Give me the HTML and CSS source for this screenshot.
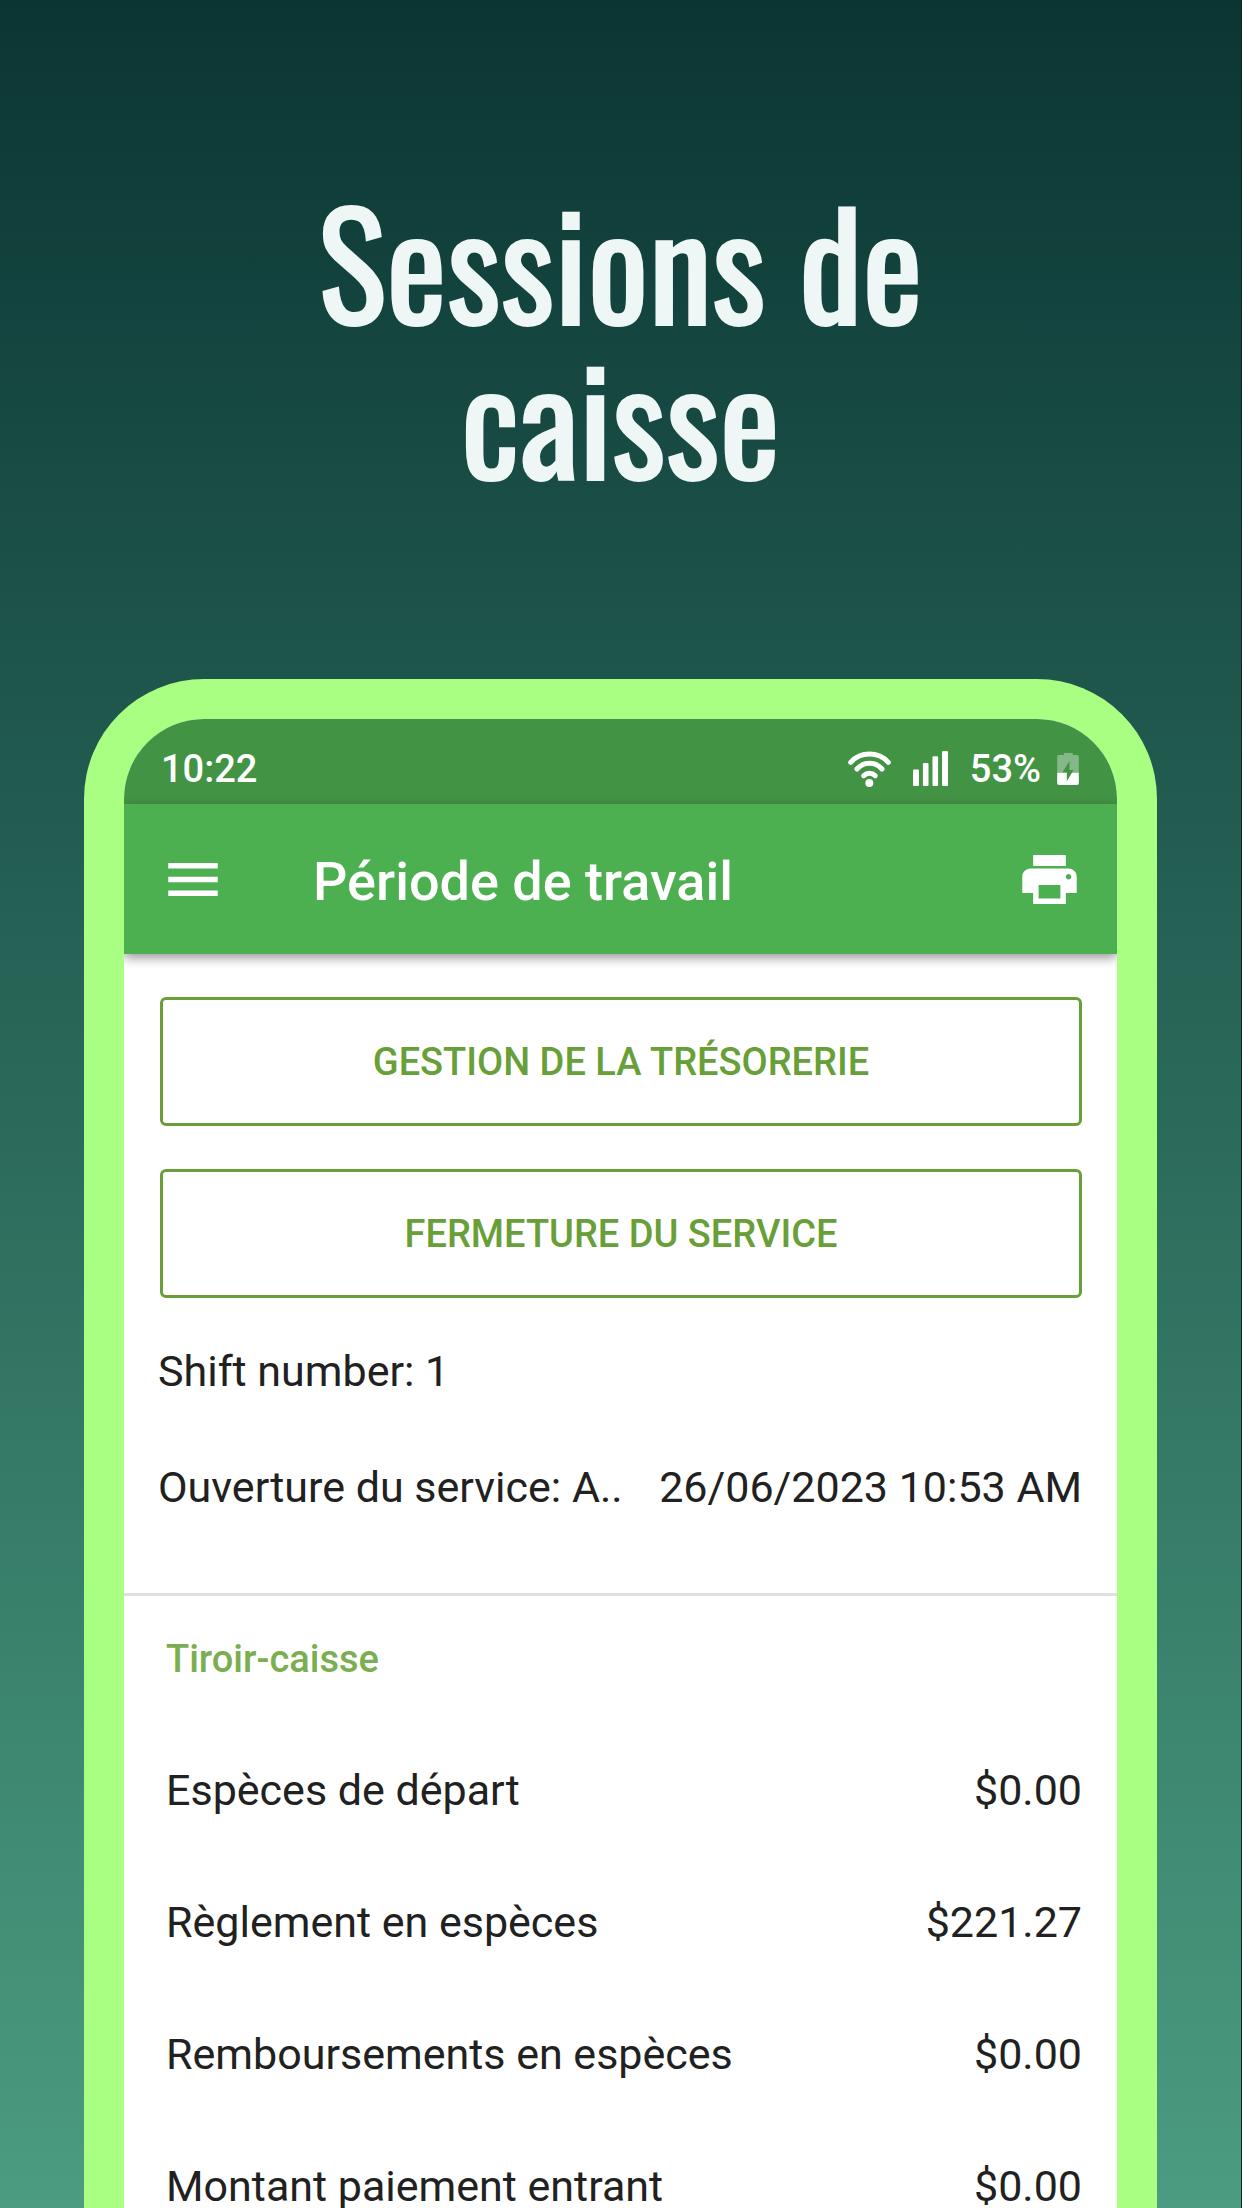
FILE: index.html
```html
<!DOCTYPE html>
<html lang="fr">
<head>
    <meta charset="UTF-8">
    <meta name="viewport" content="width=device-width, initial-scale=1.0">
    <title>Sessions de caisse</title>
    <link rel="stylesheet" href="styles.css">
</head>
<body>
    <main class="page">
        <h1 class="headline">Sessions de<br>caisse</h1>

        <div class="phone">
            <div class="status-bar">
                <span class="clock">10:22</span>
                <!-- Wifi -->
                <svg class="wifi" viewBox="85 84 129 108" aria-hidden="true">
                    <g fill="none" stroke="#fff" stroke-width="15" stroke-linecap="round">
                        <path d="M93 118A77 77 0 0 1 206 118"/>
                        <path d="M112 138A50 50 0 0 1 187 138"/>
                        <path d="M132 158A25 25 0 0 1 167 158"/>
                    </g>
                    <circle cx="149" cy="180" r="12" fill="#fff"/>
                </svg>
                <!-- Signal -->
                <svg class="signal" viewBox="281 86 106 106" aria-hidden="true">
                    <g fill="#fff">
                        <rect x="281" y="142" width="18" height="50" rx="3"/>
                        <rect x="311" y="122" width="17" height="70" rx="3"/>
                        <rect x="340" y="102" width="17" height="90" rx="3"/>
                        <rect x="369" y="86" width="18" height="106" rx="3"/>
                    </g>
                </svg>
                <span class="charge">53%</span>
                <!-- Battery -->
                <svg class="battery" viewBox="713 91 65 96" aria-hidden="true">
                    <path d="M719 97h14v-3q0-3 3-3h21q3 0 3 3v3h12q6 0 6 6v47h-65v-47q0-6 6-6z" fill="#fff" fill-opacity=".35"/>
                    <path d="M713 150h65v31q0 6-6 6h-53q-6 0-6-6z" fill="#fff"/>
                    <path d="M750 115v27h12l-20 34v-27h-13z" fill="#439345"/>
                </svg>
            </div>

            <header class="app-bar">
                <button class="icon-button" type="button" aria-label="Menu">
                    <svg width="50" height="33" viewBox="3 6 18 12"><path fill="#fff" d="M3 18h18v-2H3v2zm0-5h18v-2H3v2zm0-7v2h18V6H3z"/></svg>
                </button>
                <h2 class="app-title">Période de travail</h2>
                <button class="icon-button" type="button" aria-label="Imprimer">
                    <svg width="55" height="49" viewBox="2 3 20 18"><path fill="#fff" d="M19 8H5c-1.66 0-3 1.34-3 3v6h4v4h12v-4h4v-6c0-1.66-1.34-3-3-3zm-3 11H8v-5h8v5zm3-7c-.55 0-1-.45-1-1s.45-1 1-1 1 .45 1 1-.45 1-1 1zm-1-9H6v4h12V3z"/></svg>
                </button>
            </header>

            <section class="shift">
                <button class="button" type="button">GESTION DE LA TRÉSORERIE</button>
                <button class="button" type="button">FERMETURE DU SERVICE</button>
                <p class="shift-line">Shift number: 1</p>
                <p class="shift-line">
                    <span>Ouverture du service: A..</span>
                    <span>26/06/2023 10:53 AM</span>
                </p>
            </section>

            <section class="drawer">
                <h3 class="drawer-title">Tiroir-caisse</h3>
                <table class="drawer-table">
                    <tr>
                        <th scope="row">Espèces de départ</th>
                        <td>$0.00</td>
                    </tr>
                    <tr>
                        <th scope="row">Règlement en espèces</th>
                        <td>$221.27</td>
                    </tr>
                    <tr>
                        <th scope="row">Remboursements en espèces</th>
                        <td>$0.00</td>
                    </tr>
                    <tr>
                        <th scope="row">Montant paiement entrant</th>
                        <td>$0.00</td>
                    </tr>
                </table>
            </section>
        </div>
    </main>
</body>
</html>
```
FILE: styles.css
```css
* {
    box-sizing: border-box;
}

body {
    margin: 0;
    font-family: Roboto, "Liberation Sans", sans-serif;
    color: #212121;
}

.page {
    display: flex;
    flex-direction: column;
    height: 100vh;
    overflow: hidden;
    background: linear-gradient(#0b3533, #1f574d 32%, #4b9c80);
    border-right: 1px solid #0d2422;
}

.headline {
    margin: 0;
    padding: 183px 40px 186px;
    font-family: Oswald, "Roboto Condensed", "Liberation Sans Narrow", sans-serif;
    font-size: 144px;
    font-weight: 400;
    line-height: 155px;
    text-align: center;
    color: #eef7f6;
    -webkit-text-stroke: 2px #eef7f6;
}

.phone {
    flex: 1;
    margin: 0 84px;
    border: 40px solid #a8ff82;
    border-bottom: 0;
    border-radius: 120px 120px 0 0;
    background-color: #fff;
    overflow: hidden;
}

.status-bar {
    display: flex;
    align-items: center;
    height: 85px;
    padding: 14px 38px 0 37px;
    background-color: #439345;
    color: #fff;
    font-size: 38px;
    font-weight: 500;
}

.clock {
    flex: 1;
}

.wifi {
    width: 43px;
    height: 36px;
    margin-right: 22px;
}

.signal {
    width: 35px;
    height: 35px;
    margin-right: 22px;
}

.battery {
    width: 22px;
    height: 32px;
    margin-left: 16px;
}

.app-bar {
    display: flex;
    align-items: center;
    height: 150px;
    padding: 0 40px 0 44px;
    background-color: #4caf50;
    color: #fff;
    box-shadow: 0 4px 10px rgba(0, 0, 0, 0.4);
}

.icon-button {
    display: flex;
    padding: 0;
    border: 0;
    background: none;
    cursor: pointer;
}

.app-title {
    flex: 1;
    margin: 0;
    padding: 4px 0 0 95px;
    font-size: 54px;
    font-weight: 500;
}

.shift {
    display: flex;
    flex-direction: column;
    padding: 43px 35px 76px 34px;
    border-bottom: 3px solid #e0e0e0;
}

.button {
    height: 129px;
    margin: 0 0 43px 2px;
    border: 3px solid #689f38;
    border-radius: 6px;
    background-color: #fff;
    color: #689f38;
    font-family: inherit;
    font-size: 38px;
    font-weight: 500;
    cursor: pointer;
}

.shift-line {
    display: flex;
    justify-content: space-between;
    margin: 0 0 56px;
    font-size: 43px;
    line-height: 60px;
}

.shift-line:last-child {
    margin-bottom: 0;
}

.drawer {
    padding: 36px 35px 0 42px;
}

.drawer-title {
    margin: 0;
    color: #7aae50;
    font-size: 38px;
    font-weight: 500;
    line-height: 54px;
}

.drawer-table {
    width: 100%;
    margin-top: 38px;
    border-collapse: collapse;
    font-size: 43px;
}

.drawer-table th,
.drawer-table td {
    height: 132px;
    padding: 0;
    font-weight: 400;
    text-align: left;
}

.drawer-table td {
    text-align: right;
}
```
